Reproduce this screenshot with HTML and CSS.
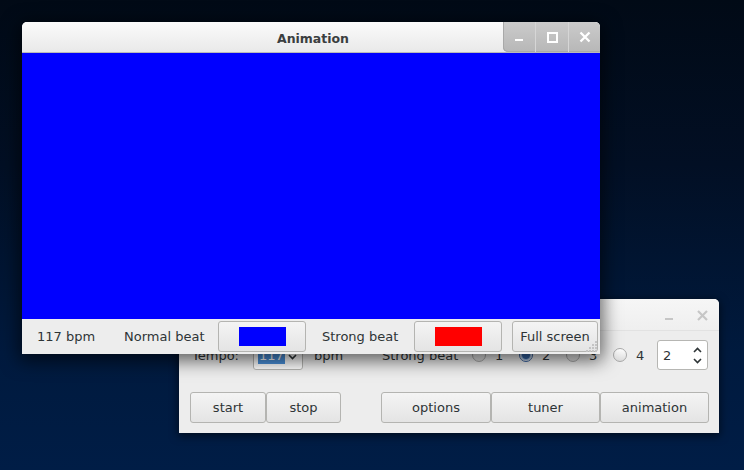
FILE: index.html
```html
<!DOCTYPE html>
<html>
<head>
<meta charset="utf-8">
<link rel="stylesheet" href="styles.css">
</head>
<body>
<div class="desktop">
  <div class="win back">
    <div class="tb-back">
      <span class="bk-min"></span>
      <svg class="bk-close" width="11" height="11" viewBox="0 0 11 11"><path d="M1 1L10 10M10 1L1 10" stroke="#c6c6c6" stroke-width="2.2"/></svg>
    </div>
    <div class="content">
      <div class="row1">
        <span class="lbl tempo">Tempo:</span>
        <div class="spin combo"><span class="sel">117</span><svg class="chev" width="9" height="6" viewBox="0 0 9 6"><path d="M1 1L4.5 4.5L8 1" stroke="#2e3436" stroke-width="1.6" fill="none"/></svg></div>
        <span class="lbl bpm">bpm</span>
        <span class="lbl sb">Strong beat</span>
        <span class="radio"><span class="dot"></span>1</span>
        <span class="radio"><span class="dot on"></span>2</span>
        <span class="radio"><span class="dot"></span>3</span>
        <span class="radio"><span class="dot"></span>4</span>
        <div class="spin num"><span class="val">2</span>
          <span class="arrows">
            <svg width="9" height="6" viewBox="0 0 9 6"><path d="M1 5L4.5 1.5L8 5" stroke="#2e3436" stroke-width="1.6" fill="none"/></svg>
            <svg width="9" height="6" viewBox="0 0 9 6"><path d="M1 1L4.5 4.5L8 1" stroke="#2e3436" stroke-width="1.6" fill="none"/></svg>
          </span>
        </div>
      </div>
      <div class="row2">
        <button class="btn w-start">start</button>
        <button class="btn w-stop">stop</button>
        <button class="btn w-opt">options</button>
        <button class="btn w-tun">tuner</button>
        <button class="btn w-ani">animation</button>
      </div>
    </div>
  </div>

  <div class="win front">
    <div class="titlebar">
      <span class="title">Animation</span>
      <div class="controls">
        <span class="ctl"><svg width="10" height="10" viewBox="0 0 10 10"><rect x="1" y="7" width="8" height="2" fill="#fff"/></svg></span>
        <span class="ctl"><svg width="11" height="11" viewBox="0 0 11 11"><rect x="1" y="1" width="9" height="9" fill="none" stroke="#fff" stroke-width="2"/></svg></span>
        <span class="ctl"><svg width="12" height="12" viewBox="0 0 12 12"><path d="M1.5 1.5L10.5 10.5M10.5 1.5L1.5 10.5" stroke="#fff" stroke-width="2.3"/></svg></span>
      </div>
    </div>
    <div class="canvas"></div>
    <div class="bar">
      <span class="cell">117 bpm</span>
      <span class="cell">Normal beat</span>
      <button class="btn swatch-btn"><span class="swatch blue"></span></button>
      <span class="cell strong">Strong beat</span>
      <button class="btn swatch-btn"><span class="swatch red"></span></button>
      <span></span>
      <button class="btn fs">Full screen</button>
      <svg class="grip" width="12" height="12" viewBox="0 0 12 12">
        <g fill="#c4c4c4">
          <rect x="9" y="1" width="2" height="2"/>
          <rect x="6" y="4" width="2" height="2"/><rect x="9" y="4" width="2" height="2"/>
          <rect x="3" y="7" width="2" height="2"/><rect x="6" y="7" width="2" height="2"/><rect x="9" y="7" width="2" height="2"/>
          <rect x="0" y="10" width="2" height="2"/><rect x="3" y="10" width="2" height="2"/><rect x="6" y="10" width="2" height="2"/><rect x="9" y="10" width="2" height="2"/>
        </g>
      </svg>
    </div>
  </div>
</div>
</body>
</html>
```

FILE: styles.css
```css
html, body {
  margin: 0;
  padding: 0;
}
body {
  width: 744px;
  height: 470px;
  overflow: hidden;
  font-family: "DejaVu Sans", "Liberation Sans", sans-serif;
  font-size: 13px;
  color: #2e3436;
}
.desktop {
  position: relative;
  width: 744px;
  height: 470px;
  background: linear-gradient(180deg, #010a16 0%, #020f24 35%, #001a3e 75%, #001d46 100%);
}
.win {
  position: absolute;
  background: #ededed;
  display: flex;
  flex-direction: column;
}
/* back window */
.back {
  left: 179px;
  top: 299px;
  width: 540px;
  height: 134px;
  border-radius: 5px 5px 0 0;
  box-shadow: 0 2px 8px 1px rgba(0,0,0,0.55);
}
.tb-back {
  background: linear-gradient(#f6f6f6, #efefef);
  border-bottom: 1px solid #e2e2e2;
  border-radius: 5px 5px 0 0;
  display: flex;
  align-items: flex-end;
  justify-content: flex-end;
  padding: 0 11px 9px 0;
  gap: 24px;
  box-sizing: border-box;
  height: 32px;
}
.bk-min {
  width: 8px;
  height: 2px;
  background: #c6c6c6;
  margin-bottom: 1px;
}
.content {
  padding: 9px 10px 0 11px;
  display: flex;
  flex-direction: column;
}
.row1 {
  display: grid;
  grid-template-columns: 63px 50px 79px 90px 47px 47px 47px 44px 51px;
  align-items: center;
  height: 30px;
}
.tempo { padding-left: 2px; }
.bpm { padding-left: 11px; }
.spin {
  box-sizing: border-box;
  height: 30px;
  border: 1px solid #b6b6b3;
  border-radius: 3px;
  background: #fff;
  display: flex;
  align-items: center;
}
.combo {
  padding-left: 4px;
  justify-content: space-between;
  padding-right: 5px;
}
.sel {
  background: #4a90d9;
  color: #fff;
  padding: 0 1px;
  line-height: 17px;
}
.chev { margin-top: 4px; }
.radio {
  display: flex;
  align-items: center;
  gap: 9px;
}
.dot {
  width: 14px;
  height: 14px;
  box-sizing: border-box;
  border-radius: 50%;
  border: 1px solid #a9a9a9;
  background: linear-gradient(#ffffff, #dcdcdc);
}
.dot.on {
  background: radial-gradient(circle, #3465a4 0 3.5px, #8fb2dc 4.5px, #f0f0f0 6px);
  border-color: #3a63a0;
}
.num {
  justify-content: space-between;
  padding: 0 5px 0 5px;
}
.arrows {
  display: flex;
  flex-direction: column;
  gap: 5px;
}
.arrows svg { display: block; }
.row2 {
  display: flex;
  margin-top: 22px;
}
.btn {
  box-sizing: border-box;
  height: 31px;
  font-family: inherit;
  font-size: 13px;
  color: #2e3436;
  border: 1px solid #b4b4b1;
  border-radius: 3px;
  background: linear-gradient(#f4f4f4, #e4e4e4);
  padding: 0;
  display: flex;
  align-items: center;
  justify-content: center;
}
.w-start { width: 76px; }
.w-stop { width: 75px; }
.w-opt { width: 110px; margin-left: 40px; }
.w-tun { width: 109px; }
.w-ani { width: 109px; }

/* front window */
.front {
  left: 22px;
  top: 22px;
  width: 578px;
  height: 332px;
  border-radius: 5px 5px 0 0;
  box-shadow: 0 4px 18px 3px rgba(0,0,0,0.6);
}
.titlebar {
  position: relative;
  height: 31px;
  box-sizing: border-box;
  border-bottom: 1px solid #b9b9b9;
  border-radius: 5px 5px 0 0;
  background: linear-gradient(#fbfbfb, #e9e9e9);
  display: flex;
  align-items: center;
  justify-content: center;
}
.title {
  font-weight: bold;
  font-size: 12.5px;
  color: #3b3e40;
  margin-left: 4px;
  margin-top: 2px;
}
.controls {
  position: absolute;
  right: 0;
  top: 0;
  height: 30px;
  display: flex;
  border-radius: 0 5px 0 5px;
  background: linear-gradient(#cbcbcb, #b7b7b7);
  box-shadow: inset 1px 0 0 #a9a9a9, inset 0 -1px 0 #a9a9a9;
  overflow: hidden;
}
.ctl {
  width: 32px;
  display: flex;
  align-items: center;
  justify-content: center;
  border-left: 1px solid #d6d6d6;
}
.ctl:first-child { border-left: none; }
.ctl:last-child { width: 31px; }
.canvas {
  flex: 1;
  background: #0000ff;
}
.bar {
  position: relative;
  height: 35px;
  box-sizing: border-box;
  padding: 2px 0 2px 15px;
  display: grid;
  grid-template-columns: 87px 94px 88px 108px 88px 10px 86px;
  align-items: center;
}
.strong { padding-left: 16px; }
.swatch-btn { height: 31px; }
.swatch {
  width: 47px;
  height: 19px;
}
.blue { background: #0000ff; }
.red { background: #ff0000; }
.fs { height: 31px; }
.grip {
  position: absolute;
  right: 2px;
  bottom: 2px;
}
```
